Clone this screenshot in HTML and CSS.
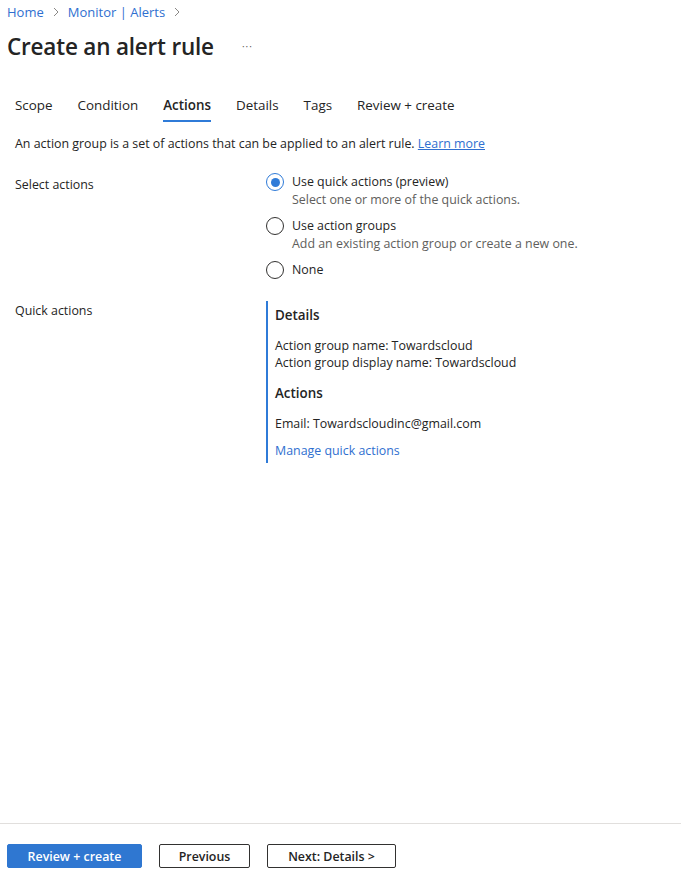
FILE: index.html
```html
<!DOCTYPE html>
<html>
<head>
<meta charset="utf-8">
<link rel="stylesheet" href="styles.css">
</head>
<body>
<div class="page">
  <div class="top">
    <nav class="crumbs">
      <a class="crumb">Home</a>
      <svg class="chev" width="8" height="10" viewBox="0 0 8 10"><path d="M2 1 L6 5 L2 9" fill="none" stroke="#8a8886" stroke-width="1"/></svg>
      <a class="crumb">Monitor | Alerts</a>
      <svg class="chev" width="8" height="10" viewBox="0 0 8 10"><path d="M2 1 L6 5 L2 9" fill="none" stroke="#8a8886" stroke-width="1"/></svg>
    </nav>
    <div class="title-row">
      <h1 class="title">Create an alert rule</h1>
      <span class="more">···</span>
    </div>
    <div class="tabs">
      <span class="tab">Scope</span>
      <span class="tab">Condition</span>
      <span class="tab active">Actions</span>
      <span class="tab">Details</span>
      <span class="tab">Tags</span>
      <span class="tab">Review + create</span>
    </div>
    <p class="intro">An action group is a set of actions that can be applied to an alert rule. <a class="link underline">Learn more</a></p>
    <div class="field">
      <div class="label">Select actions</div>
      <div class="options">
        <div class="opt">
          <span class="radio checked"></span>
          <div class="opt-text">
            <div>Use quick actions (preview)</div>
            <div class="sub">Select one or more of the quick actions.</div>
          </div>
        </div>
        <div class="opt">
          <span class="radio"></span>
          <div class="opt-text">
            <div>Use action groups</div>
            <div class="sub">Add an existing action group or create a new one.</div>
          </div>
        </div>
        <div class="opt">
          <span class="radio"></span>
          <div class="opt-text">
            <div>None</div>
          </div>
        </div>
      </div>
    </div>
    <div class="field qa">
      <div class="label">Quick actions</div>
      <div class="panel">
        <div class="ph">Details</div>
        <div class="pl first">Action group name: Towardscloud</div>
        <div class="pl">Action group display name: Towardscloud</div>
        <div class="ph second">Actions</div>
        <div class="pl email">Email: Towardscloudinc@gmail.com</div>
        <a class="link manage">Manage quick actions</a>
      </div>
    </div>
  </div>
  <div class="footer">
    <button class="btn primary">Review + create</button>
    <button class="btn prev">Previous</button>
    <button class="btn next">Next: Details &gt;</button>
  </div>
</div>
</body>
</html>
```
FILE: styles.css
```css
html, body {
  margin: 0;
  padding: 0;
  background: #fff;
}
body {
  font-family: "Open Sans", "Noto Sans", sans-serif;
  color: #242424;
  font-size: 12.4px;
}
.page {
  height: 877px;
  display: flex;
  flex-direction: column;
}
.top {
  flex: 1;
}
.crumbs {
  display: flex;
  align-items: center;
  gap: 8px;
  padding: 3px 0 0 7px;
  height: 18px;
  font-size: 13px;
}
.crumb {
  color: #2f6fd0;
}
.chev {
  display: block;
}
.title-row {
  display: flex;
  align-items: center;
  padding: 9px 0 0 7px;
  height: 32px;
}
.title {
  margin: 0;
  font-size: 22.5px;
  font-weight: 600;
  color: #242424;
  letter-spacing: -0.2px;
}
.more {
  margin-left: 28px;
  color: #605e5c;
  font-size: 10px;
  letter-spacing: 1px;
}
.tabs {
  display: flex;
  gap: 25px;
  padding: 33px 0 0 15px;
  font-size: 13.4px;
}
.tab {
  padding-bottom: 5px;
  border-bottom: 2px solid transparent;
  line-height: 20px;
}
.tab.active {
  font-weight: 600;
  border-bottom-color: #2f7bd8;
}
.intro {
  margin: 13px 0 0 15px;
  line-height: 18px;
}
.link {
  color: #2f6fd0;
}
.underline {
  text-decoration: underline;
}
.field {
  display: flex;
  padding-left: 15px;
}
.label {
  width: 251px;
  line-height: 18px;
  padding-top: 23px;
}
.options {
  padding-top: 20px;
  display: flex;
  flex-direction: column;
  gap: 8px;
}
.opt {
  display: flex;
  gap: 8px;
}
.radio {
  width: 16px;
  height: 16px;
  border: 1.5px solid #323130;
  border-radius: 50%;
  flex: none;
  display: flex;
  align-items: center;
  justify-content: center;
}
.radio.checked {
  border-color: #2f7bd8;
}
.radio.checked::after {
  content: "";
  width: 9px;
  height: 9px;
  border-radius: 50%;
  background: #2f7bd8;
}
.opt-text {
  line-height: 18px;
}
.sub {
  color: #605e5c;
}
.qa .label {
  padding-top: 23px;
}
.panel {
  margin-top: 22px;
  border-left: 2px solid #2f7bd8;
  padding: 4px 0 4px 7px;
  display: flex;
  flex-direction: column;
  line-height: 17px;
}
.ph {
  font-weight: 600;
  font-size: 13.4px;
  line-height: 20px;
}
.ph.second {
  margin-top: 12px;
}
.pl.first {
  margin-top: 12px;
}
.pl.email {
  margin-top: 12px;
}
.manage {
  margin-top: 10px;
}
.footer {
  border-top: 1px solid #e1dfdd;
  display: flex;
  align-items: flex-start;
  gap: 17px;
  padding: 20px 0 0 7px;
  box-sizing: border-box;
  height: 54px;
}
.btn {
  font-family: inherit;
  font-size: 12.4px;
  font-weight: 600;
  height: 24px;
  background: #fff;
  border: 1px solid #323130;
  border-radius: 2px;
  color: #242424;
  padding: 0;
  white-space: nowrap;
}
.btn.primary {
  background: #2f77d1;
  border-color: #2f77d1;
  color: #fff;
  width: 135px;
}
.btn.prev { width: 91px; }
.btn.next { width: 129px; }
```
